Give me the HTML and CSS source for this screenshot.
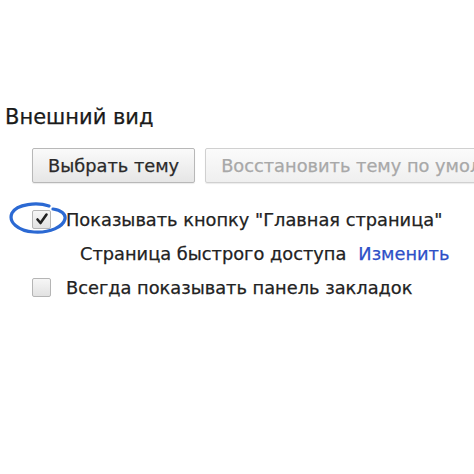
FILE: index.html
```html
<!DOCTYPE html>
<html lang="ru">
<head>
<meta charset="utf-8">
<link rel="stylesheet" href="styles.css">
</head>
<body>
<div class="page">
  <h1 class="title">Внешний вид</h1>
  <div class="buttons">
    <button class="btn">Выбрать тему</button>
    <button class="btn btn-disabled">Восстановить тему по умолчанию</button>
  </div>
  <div class="option first">
    <span class="check-wrap">
      <span class="checkbox">
        <svg viewBox="0 0 14 14" width="14" height="14"><path d="M2.5 7.5 L5.5 11 L11.5 2.5" fill="none" stroke="#222" stroke-width="2.6" stroke-linecap="round" stroke-linejoin="round"/></svg>
      </span>
      <svg class="circle" viewBox="0 0 60 34" width="60" height="34"><path d="M40 5 C28 1 8 3 3 12 C-1 21 9 30 25 31 C41 32 54 26 56 18 C57 13 52 9 44 8" fill="none" stroke="#2b69d3" stroke-width="3.2" stroke-linecap="round"/></svg>
    </span>
    <span class="label">Показывать кнопку "Главная страница"</span>
  </div>
  <div class="sub">
    <span class="label">Страница быстрого доступа</span>
    <a class="link">Изменить</a>
  </div>
  <div class="option">
    <span class="check-wrap"><span class="checkbox"></span></span>
    <span class="label">Всегда показывать панель закладок</span>
  </div>
</div>
</body>
</html>
```
FILE: styles.css
```css
html, body {
  margin: 0;
  padding: 0;
  background: #fff;
  overflow: hidden;
}
body {
  width: 474px;
  height: 474px;
  font-family: "DejaVu Sans", "Liberation Sans", sans-serif;
  color: #222;
  -webkit-text-stroke: 0.25px currentColor;
}
.page {
  padding: 104px 0 0 5px;
}
.title {
  margin: 0;
  font-size: 21px;
  font-weight: normal;
  line-height: 26px;
  color: #1a1a1a;
}
.buttons {
  display: flex;
  gap: 10px;
  margin: 18px 0 0 27px;
  white-space: nowrap;
}
.btn {
  flex: none;
  height: 35px;
  padding: 0 15px;
  font-family: inherit;
  font-size: 17.8px;
  color: #2a2a2a;
  background: linear-gradient(#fafafa, #e6e6e6);
  border: 1px solid #b8b8b8;
  border-radius: 2px;
  box-shadow: 0 1px 1px rgba(0,0,0,0.08);
  -webkit-text-stroke: 0.25px currentColor;
}
.btn-disabled {
  color: #a8a8a8;
  border-color: #d0d0d0;
  background: linear-gradient(#fbfbfb, #efefef);
}
.option {
  display: flex;
  align-items: center;
  margin-left: 27px;
  height: 34px;
}
.option.first {
  margin-top: 19px;
}
.check-wrap {
  position: relative;
  width: 34px;
  flex: none;
  display: flex;
  align-items: center;
}
.checkbox {
  width: 17px;
  height: 17px;
  border: 1px solid #b5b5b5;
  border-radius: 2px;
  background: linear-gradient(#f6f6f6, #e2e2e2);
  display: flex;
  align-items: center;
  justify-content: center;
}
.circle {
  position: absolute;
  left: -23px;
  top: -9px;
}
.label {
  font-size: 17.8px;
  color: #222;
  white-space: nowrap;
}
.sub {
  display: flex;
  align-items: center;
  gap: 12px;
  margin-left: 75px;
  height: 34px;
}
.link {
  font-size: 17.8px;
  color: #2d4fc7;
}
```
